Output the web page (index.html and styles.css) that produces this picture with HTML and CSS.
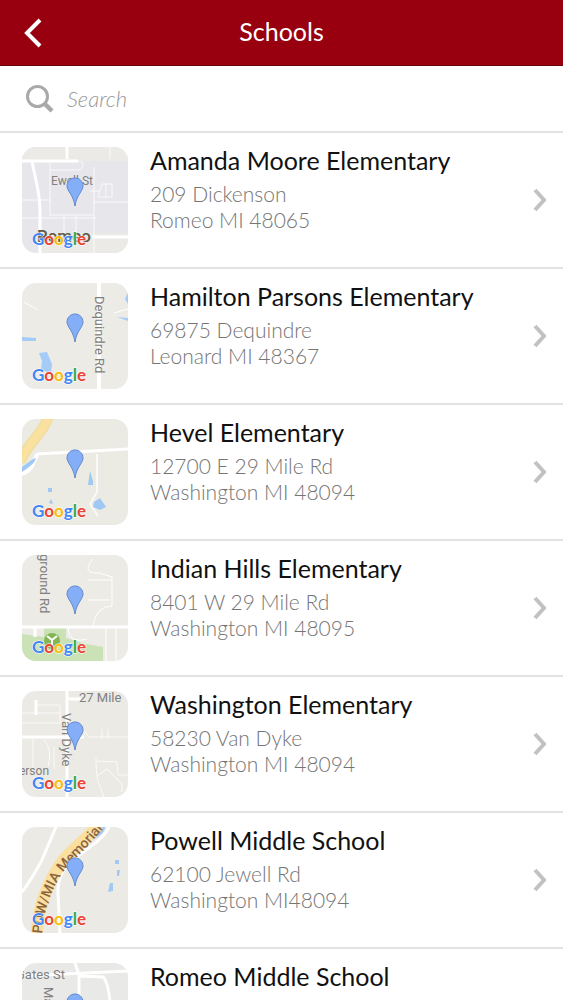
FILE: index.html
```html
<!DOCTYPE html>
<html lang="en">
<head>
    <meta charset="UTF-8">
    <meta name="viewport" content="width=device-width, initial-scale=1.0">
    <title>Schools</title>
    <link rel="stylesheet" href="styles.css">
</head>
<body>
    <!-- shared map pin -->
    <svg class="defs" width="0" height="0" aria-hidden="true">
        <symbol id="pin" viewBox="0 0 18 30">
            <path d="M9 1C4.500 1 1 4.500 1 9c0 5 6.500 9 8 20 1.500-11 8-15 8-20 0-4.500-3.500-8-8-8z" fill="#84aff8" stroke="#6388cb" stroke-width="1"/>
        </symbol>
    </svg>

    <div class="screen">
        <header class="navbar">
            <button class="back" aria-label="Back">
                <svg width="20" height="32" viewBox="0 0 20 32"><path d="M17 3L4 16l13 13" fill="none" stroke="#fff" stroke-width="4"/></svg>
            </button>
            <h1>Schools</h1>
        </header>

        <label class="search">
            <svg width="30" height="30" viewBox="0 0 30 30" fill="none" stroke="#a9a9a9"><circle cx="12.500" cy="12.500" r="10" stroke-width="3"/><path d="M19.500 19.500l7.500 7.500" stroke-width="4.500"/></svg>
            <input type="search" placeholder="Search" aria-label="Search">
        </label>

        <ul class="schools">
            <li><a class="school" href="#">
                <svg class="map" viewBox="0 0 106 106">
                    <rect width="106" height="106" fill="#e7e7eb"/>
                    <path d="M0 0h106v14H0zM20 86h86v20H20z" fill="#ebeae6"/>
                    <g fill="none" stroke="#fff">
                        <path d="M0 14h56M45 0v12M10 14c3 18 8 30 8 50v42M70 90h36" stroke-width="3"/>
                        <path d="M28 14v55M0 53h28M0 71h74M72 20v86M42 69v20M54 69v20M28 68h44M46 14h10q5 0 5 4t-5 5H28M68 44h10M80 37h10v13H76zM84 37v13M72 55h34M88 0v12" stroke-width="1" opacity=".75"/>
                    </g>
                    <text class="road small" x="29" y="38">Ewell St</text>
                    <text class="town" x="15" y="95">Romeo</text>
                    <use href="#pin" x="44" y="30" width="18" height="30"/>
                    <text class="google" x="10" y="98"><tspan class="b">G</tspan><tspan class="r">o</tspan><tspan class="y">o</tspan><tspan class="b">g</tspan><tspan class="g">l</tspan><tspan class="r">e</tspan></text>
                </svg>
                <div class="info">
                    <h2>Amanda Moore Elementary</h2>
                    <p>209 Dickenson<br>Romeo MI 48065</p>
                </div>
                <svg class="chevron" viewBox="0 0 14 24"><path d="M2 2l9 10-9 10"/></svg>
            </a></li>
            <li><a class="school" href="#">
                <svg class="map" viewBox="0 0 106 106">
                    <rect width="106" height="106" fill="#ecebe6"/>
                    <path d="M77 0v106" stroke="#fff" stroke-width="4"/>
                    <path d="M2 19l14 8M92 30l14-4" fill="none" stroke="#fff"/>
                    <path d="M0 54l14 1v3H0zM17 70l8-1 5 12-1 9-10-3 1-9zM106 9l-3 7 3 5zM95 34l11 1v3z" fill="#a5cbf8"/>
                    <text class="road" transform="translate(73 13) rotate(90)">Dequindre Rd</text>
                    <use href="#pin" x="44" y="30" width="18" height="30"/>
                    <text class="google" x="10" y="98"><tspan class="b">G</tspan><tspan class="r">o</tspan><tspan class="y">o</tspan><tspan class="b">g</tspan><tspan class="g">l</tspan><tspan class="r">e</tspan></text>
                </svg>
                <div class="info">
                    <h2>Hamilton Parsons Elementary</h2>
                    <p>69875 Dequindre<br>Leonard MI 48367</p>
                </div>
                <svg class="chevron" viewBox="0 0 14 24"><path d="M2 2l9 10-9 10"/></svg>
            </a></li>
            <li><a class="school" href="#">
                <svg class="map" viewBox="0 0 106 106">
                    <rect width="106" height="106" fill="#ebeae3"/>
                    <path d="M15 35l91-5" fill="none" stroke="#fff" stroke-width="3"/>
                    <path d="M75 35v38l-7 12 8 12" fill="none" stroke="#fff" stroke-width="2" opacity=".7"/>
                    <path d="M0 55c8-3 10-6 15-20" fill="none" stroke="#fff" stroke-width="4"/>
                    <path d="M27-4C21 16 7 21-2 43" fill="none" stroke="#f2dda3" stroke-width="11"/>
                    <path d="M27-4C21 16 7 21-2 43" fill="none" stroke="#fbe1a0" stroke-width="7"/>
                    <path d="M0 48c5-3 8-7 14-9-2 7-8 9-14 14zM26 69h4v4h-4zM27 84l2-4 2 5zM68 52l3 10v4h-5zM72 83l6-4 6 9-6 3-7-3z" fill="#9fc8f5"/>
                    <use href="#pin" x="44" y="30" width="18" height="30"/>
                    <text class="google" x="10" y="98"><tspan class="b">G</tspan><tspan class="r">o</tspan><tspan class="y">o</tspan><tspan class="b">g</tspan><tspan class="g">l</tspan><tspan class="r">e</tspan></text>
                </svg>
                <div class="info">
                    <h2>Hevel Elementary</h2>
                    <p>12700 E 29 Mile Rd<br>Washington MI 48094</p>
                </div>
                <svg class="chevron" viewBox="0 0 14 24"><path d="M2 2l9 10-9 10"/></svg>
            </a></li>
            <li><a class="school" href="#">
                <svg class="map" viewBox="0 0 106 106">
                    <rect width="106" height="106" fill="#ecebe6"/>
                    <path d="M0 79l22 3V73h22v10l20 6 17 3v14H0z" fill="#cae2b5"/>
                    <path d="M0 72h106M13 72v10" stroke="#fff" stroke-width="3"/>
                    <path d="M71 4c-9 10-5 15 6 14l13 4v29q-16 0-19 20M66 25h24M66 45h22M46 72c1 12 6 15 19 12M84 72v34M94 72v34" fill="none" stroke="#fff" stroke-width="1"/>
                    <circle cx="30" cy="86" r="8" fill="#84b655"/>
                    <path d="M25 81l5 4 5-4M30 84v6" fill="none" stroke="#fff" stroke-width="2"/>
                    <text class="road" transform="translate(18 -7) rotate(90)">yground Rd</text>
                    <use href="#pin" x="44" y="30" width="18" height="30"/>
                    <text class="google" x="10" y="98"><tspan class="b">G</tspan><tspan class="r">o</tspan><tspan class="y">o</tspan><tspan class="b">g</tspan><tspan class="g">l</tspan><tspan class="r">e</tspan></text>
                </svg>
                <div class="info">
                    <h2>Indian Hills Elementary</h2>
                    <p>8401 W 29 Mile Rd<br>Washington MI 48095</p>
                </div>
                <svg class="chevron" viewBox="0 0 14 24"><path d="M2 2l9 10-9 10"/></svg>
            </a></li>
            <li><a class="school" href="#">
                <svg class="map" viewBox="0 0 106 106">
                    <rect width="106" height="106" fill="#ebeae5"/>
                    <path d="M45 0v106M0 46h62M45 8h14M14 9v15" fill="none" stroke="#fff" stroke-width="3"/>
                    <path d="M62 40l5 6h39M14 14h24v18H0M0 22h38M11 48v34M22 49q9 10 4 27M32 56v22M80 38v10M86 38v10M74 67c0 20 2 25 8 39M75 70l20 1 1 13h10M75 85l10-7 15 15v8" fill="none" stroke="#fff" stroke-width="1" opacity=".8"/>
                    <text class="road" x="57" y="11">27 Mile</text>
                    <text class="road" transform="translate(40 22) rotate(90)">Van Dyke</text>
                    <text class="road small" x="-7" y="84">terson</text>
                    <use href="#pin" x="44" y="30" width="18" height="30"/>
                    <text class="google" x="10" y="98"><tspan class="b">G</tspan><tspan class="r">o</tspan><tspan class="y">o</tspan><tspan class="b">g</tspan><tspan class="g">l</tspan><tspan class="r">e</tspan></text>
                </svg>
                <div class="info">
                    <h2>Washington Elementary</h2>
                    <p>58230 Van Dyke<br>Washington MI 48094</p>
                </div>
                <svg class="chevron" viewBox="0 0 14 24"><path d="M2 2l9 10-9 10"/></svg>
            </a></li>
            <li><a class="school" href="#">
                <svg class="map" viewBox="0 0 106 106">
                    <rect width="106" height="106" fill="#ebeae4"/>
                    <path d="M0 65c8-10 12-18 19-30L34 0M87 0c-12 25-53 29-51 66l2 40" fill="none" stroke="#fff" stroke-width="3"/>
                    <path d="M78 0h5c0 6-7 10-15 14zM93 33h4v4h-4zM95 43h3l-1 6h-2zM88 56h3v8l-5 1z" fill="#a0c9f4"/>
                    <path d="M15 108C15 80 25 57 40 35 50 21 66 12 76-2" fill="none" stroke="#fbdf9e" stroke-width="12"/>
                    <path id="highway" d="M20 107C22 79 32 57 43 43 54 30 66 21 87-6" fill="none"/>
                    <text class="highway"><textPath href="#highway">POW/MIA Memorial</textPath></text>
                    <use href="#pin" x="44" y="30" width="18" height="30"/>
                    <text class="google" x="10" y="98"><tspan class="b">G</tspan><tspan class="r">o</tspan><tspan class="y">o</tspan><tspan class="b">g</tspan><tspan class="g">l</tspan><tspan class="r">e</tspan></text>
                </svg>
                <div class="info">
                    <h2>Powell Middle School</h2>
                    <p>62100 Jewell Rd<br>Washington MI48094</p>
                </div>
                <svg class="chevron" viewBox="0 0 14 24"><path d="M2 2l9 10-9 10"/></svg>
            </a></li>
            <li><a class="school" href="#">
                <svg class="map" viewBox="0 0 106 106">
                    <rect width="106" height="106" fill="#e9e9e8"/>
                    <path d="M0 13l106-5M53 0l4 12v94M57 13l24 1q10 8 9 92" fill="none" stroke="#fff" stroke-width="3"/>
                    <text class="road" x="-6" y="16">Gates St</text>
                    <text class="road" transform="translate(22 24) rotate(90)">Main</text>
                    <use href="#pin" x="44" y="30" width="18" height="30"/>
                </svg>
                <div class="info">
                    <h2>Romeo Middle School</h2>
                </div>
            </a></li>
        </ul>
    </div>
</body>
</html>
```

FILE: styles.css
```css
* {
    box-sizing: border-box;
}

body {
    margin: 0;
    background: #fff;
    color: #111;
    font-family: Lato, "Liberation Sans", sans-serif;
}

.defs {
    position: absolute;
}

.screen {
    height: 100vh;
    overflow: hidden;
}

.navbar {
    display: grid;
    grid-template-columns: 66px 1fr 66px;
    align-items: center;
    height: 66px;
    background: #98000f;
    border-bottom: 1px solid #69000b;
    color: #fff;
}

.navbar h1 {
    margin: 0;
    padding-bottom: 4px;
    font-size: 25px;
    font-weight: 400;
    line-height: 30px;
    text-align: center;
}

.back {
    display: flex;
    justify-content: center;
    padding: 0;
    border: none;
    background: none;
    cursor: pointer;
}

.search {
    display: flex;
    align-items: center;
    gap: 12px;
    height: 67px;
    padding: 0 25px;
    border-bottom: 2px solid #e2e2e2;
}

.search input {
    flex: 1;
    min-width: 0;
    padding: 0;
    border: none;
    outline: none;
    background: none;
    font: italic 300 22px/28px Lato, sans-serif;
}

.search input::placeholder {
    color: #999;
    opacity: 1;
}

.schools {
    margin: 0;
    padding: 0;
    list-style: none;
}

.school {
    display: flex;
    align-items: flex-start;
    min-height: 136px;
    padding: 14px 16px 14px 22px;
    border-bottom: 2px solid #e2e2e2;
    color: inherit;
    text-decoration: none;
}

.map {
    flex: none;
    width: 106px;
    height: 106px;
    border-radius: 14px;
    overflow: hidden;
}

.info {
    flex: 1;
    min-width: 0;
    padding-left: 22px;
}

.info h2 {
    margin: 0 0 8px;
    font-size: 25px;
    font-weight: 400;
    line-height: 26px;
}

.info p {
    margin: 0;
    color: #757575;
    font-size: 21px;
    font-weight: 300;
    line-height: 26px;
}

.chevron {
    align-self: center;
    width: 14px;
    height: 24px;
    fill: none;
    stroke: #c2c2c2;
    stroke-width: 4;
}

/* map labels */
.road {
    font: 13px Roboto, sans-serif;
    fill: #808080;
}

.road.small {
    font-size: 12px;
}

.town {
    font: 500 17px Roboto, sans-serif;
    fill: #5f5a48;
}

.highway {
    font: 500 14px Roboto, sans-serif;
    fill: #8b6540;
}

.google {
    font: 700 17px Lato, sans-serif;
    stroke: #fff;
    stroke-width: 1;
    paint-order: stroke;
}

.b {
    fill: #4285f4;
}

.r {
    fill: #ea4335;
}

.y {
    fill: #fbbc05;
}

.g {
    fill: #34a853;
}
```
